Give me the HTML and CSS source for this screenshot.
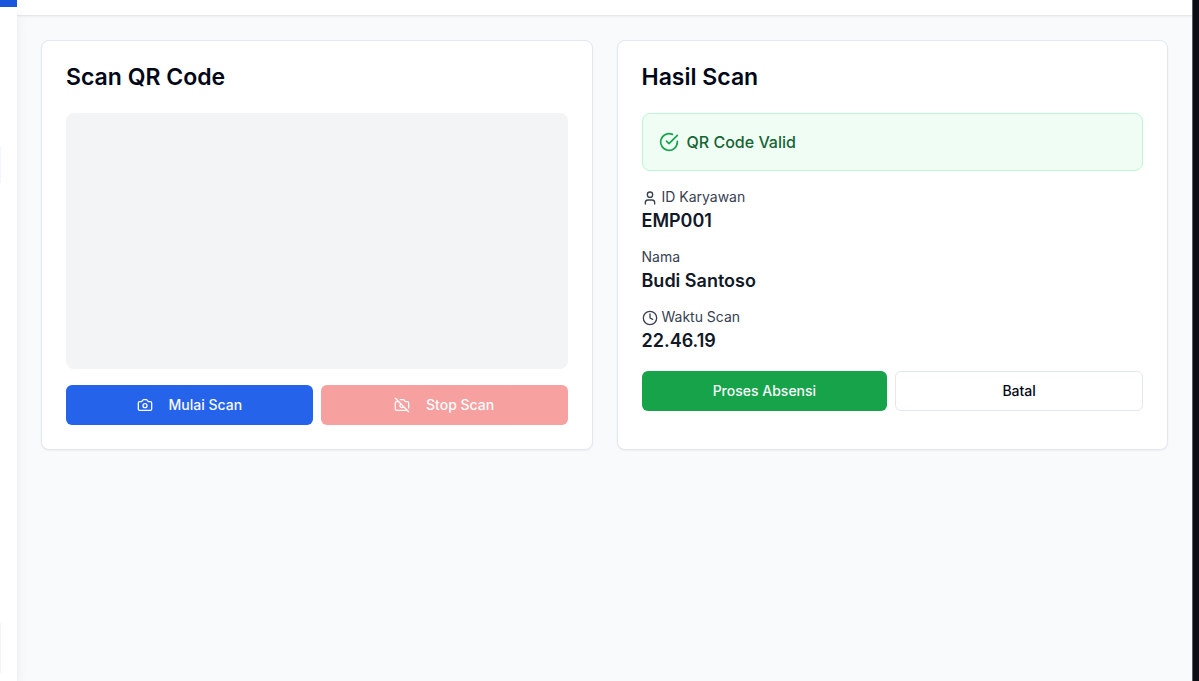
FILE: index.html
```html
<!DOCTYPE html>
<html lang="id">
<head>
<meta charset="utf-8">
<title>Scan QR Code</title>
<link rel="stylesheet" href="styles.css">
</head>
<body>
<div class="app">
  <aside class="sidebar">
    <div class="sidebar-brand"></div>
    <div class="sidebar-active"></div>
    <div class="sidebar-user"></div>
  </aside>
  <div class="page">
    <header class="topbar"></header>
    <main class="content">
      <section class="card">
        <h2 class="card-title">Scan QR Code</h2>
        <div class="preview"></div>
        <div class="actions">
          <button class="btn btn-primary" type="button">
            <svg class="icon" viewBox="0 0 24 24" aria-hidden="true"><path d="M14.5 4h-5L7 7H4a2 2 0 0 0-2 2v9a2 2 0 0 0 2 2h16a2 2 0 0 0 2-2V9a2 2 0 0 0-2-2h-3l-2.500-3z"/><circle cx="12" cy="13" r="3"/></svg>
            Mulai Scan
          </button>
          <button class="btn btn-danger" type="button" disabled>
            <svg class="icon" viewBox="0 0 24 24" aria-hidden="true"><path d="M2 2l20 20"/><path d="M7 7H4a2 2 0 0 0-2 2v9a2 2 0 0 0 2 2h16"/><path d="M9.500 4h5L17 7h3a2 2 0 0 1 2 2v7.500"/><path d="M14.121 15.121A3 3 0 1 1 9.880 10.880"/></svg>
            Stop Scan
          </button>
        </div>
      </section>
      <section class="card">
        <h2 class="card-title">Hasil Scan</h2>
        <div class="alert" role="status">
          <svg class="icon icon-status" viewBox="0 0 24 24" aria-hidden="true"><path d="M22 11.080V12a10 10 0 1 1-5.930-9.140"/><path d="M9 11l3 3L22 4"/></svg>
          <span>QR Code Valid</span>
        </div>
        <dl class="details">
          <div>
            <dt><svg class="icon" viewBox="0 0 24 24" aria-hidden="true"><path d="M19 21v-2a4 4 0 0 0-4-4H9a4 4 0 0 0-4 4v2"/><circle cx="12" cy="7" r="4"/></svg> ID Karyawan</dt>
            <dd>EMP001</dd>
          </div>
          <div>
            <dt>Nama</dt>
            <dd>Budi Santoso</dd>
          </div>
          <div>
            <dt><svg class="icon" viewBox="0 0 24 24" aria-hidden="true"><circle cx="12" cy="12" r="10"/><path d="M12 6v6l4 2"/></svg> Waktu Scan</dt>
            <dd>22.46.19</dd>
          </div>
        </dl>
        <div class="actions">
          <button class="btn btn-success" type="button">Proses Absensi</button>
          <button class="btn btn-outline" type="button">Batal</button>
        </div>
      </section>
    </main>
  </div>
  <div class="edge"></div>
</div>
</body>
</html>
```
FILE: styles.css
```css
* {
  box-sizing: border-box;
  margin: 0;
  padding: 0;
}

body {
  background: #f9fafb;
  color: #020817;
  font: 16px/24px Inter, "Liberation Sans", sans-serif;
}

.app {
  display: flex;
  min-height: 100vh;
}

.sidebar {
  display: flex;
  flex-direction: column;
  flex: 0 0 17px;
  background: #fff;
  box-shadow: 0 10px 15px -3px rgb(0 0 0 / 0.1), 0 4px 6px -4px rgb(0 0 0 / 0.1);
  z-index: 1;
}

.sidebar-brand {
  height: 7px;
  background: #1a56db;
}

.sidebar-active {
  width: 1px;
  height: 36px;
  margin-top: 140px;
  background: #eff6ff;
}

.sidebar-user {
  width: 1px;
  height: 50px;
  margin-top: auto;
  margin-bottom: 8px;
  background: #f3f4f6;
}

.page {
  flex: 1;
  min-width: 0;
}

.topbar {
  height: 16px;
  background: #fff;
  border-bottom: 1px solid #e5e7eb;
  box-shadow: 0 1px 2px rgb(0 0 0 / 0.05);
}

.content {
  display: grid;
  grid-template-columns: 1fr 1fr;
  gap: 24px;
  padding: 24px;
}

.card {
  display: flex;
  flex-direction: column;
  gap: 16px;
  padding: 24px;
  background: #fff;
  border: 1px solid #e2e8f0;
  border-radius: 8px;
  box-shadow: 0 1px 2px rgb(0 0 0 / 0.05);
}

.card-title {
  margin-bottom: 8px;
  font-size: 23px;
  font-weight: 600;
  line-height: 24px;
}

.preview {
  height: 256px;
  background: #f3f4f6;
  border-radius: 8px;
}

.actions {
  display: flex;
  gap: 8px;
}

.btn {
  display: flex;
  flex: 1;
  align-items: center;
  justify-content: center;
  gap: 16px;
  height: 40px;
  padding: 8px 16px;
  border: 0;
  border-radius: 6px;
  color: #f8fafc;
  font: 500 14px/20px Inter, "Liberation Sans", sans-serif;
}

.btn-primary {
  background: #2563eb;
}

.btn-danger {
  background: #ef4444;
  opacity: 0.5;
}

.btn-success {
  background: #16a34a;
}

.btn-outline {
  background: #fff;
  border: 1px solid #e2e8f0;
  color: #020817;
}

.icon {
  width: 16px;
  height: 16px;
  fill: none;
  stroke: currentColor;
  stroke-width: 2;
  stroke-linecap: round;
  stroke-linejoin: round;
  vertical-align: middle;
}

.alert {
  display: flex;
  align-items: center;
  gap: 8px;
  padding: 16px;
  background: #f0fdf4;
  border: 1px solid #bbf7d0;
  border-radius: 8px;
  color: #166534;
  font-weight: 500;
}

.icon-status {
  width: 20px;
  height: 20px;
  color: #16a34a;
}

.details {
  display: grid;
  gap: 12px;
}

.details dt {
  height: 20px;
  color: #374151;
  font-size: 14px;
  line-height: 20px;
}

.details dd {
  color: #111827;
  font-size: 18px;
  font-weight: 600;
  line-height: 28px;
}

.edge {
  flex: 0 0 7px;
  background: #0c0c14;
  border-left: 1px solid #5b5d63;
}
```
